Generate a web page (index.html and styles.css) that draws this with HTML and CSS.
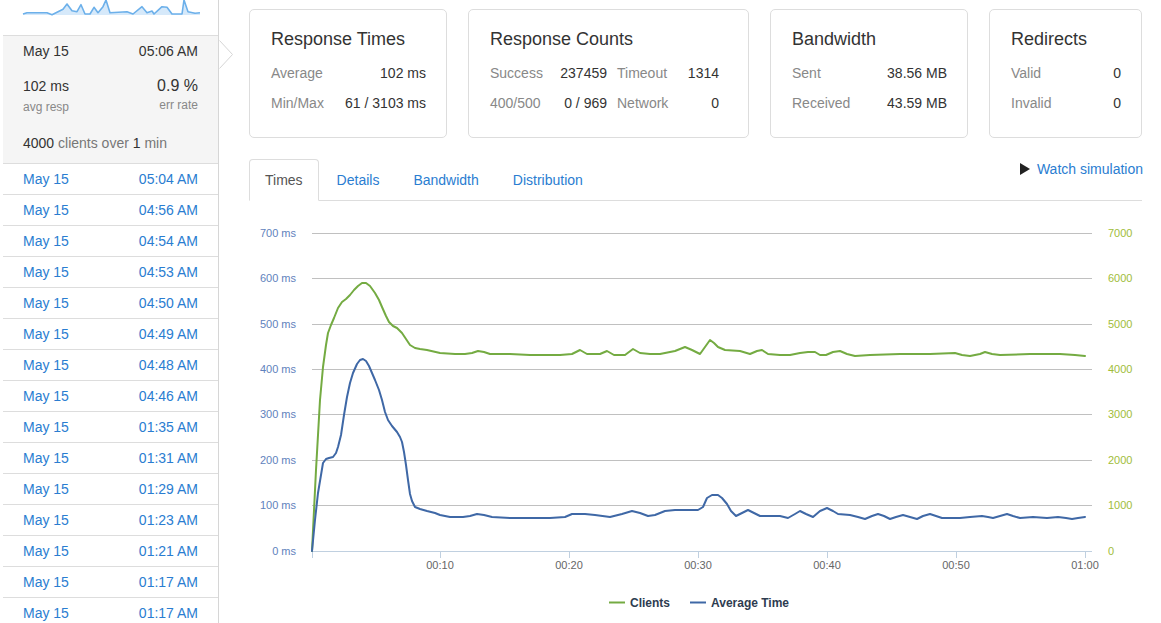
FILE: index.html
```html
<!DOCTYPE html>
<html>
<head>
<meta charset="utf-8">
<title>Load test results</title>
<link rel="stylesheet" href="styles.css">
</head>
<body>
<div class="page">
  <aside class="sidebar">
    <div class="spark">
      <svg class="spark-svg" viewBox="3 0 215 35" width="215" height="35">
        <path class="spark-fill" d="M23,14 L27,12.7 L47,12.7 L52,14.7 L58,11.7 L63,9.3 L67,4 L72,10.7 L77,11.7 L81,4.7 L85,14 L90,14 L94,7.3 L98,12.7 L103,6.7 L106,0 L110,12.7 L127,11.7 L133,14 L142,6.7 L147,12.7 L152,11 L154,14 L162,6.7 L167,7.3 L172,14 L182,14 L184,0 L188,11.7 L195,13.3 L200,12.7 L200,15 L23,15 Z"/>
        <polyline class="spark-line" points="23,14 27,12.7 47,12.7 52,14.7 58,11.7 63,9.3 67,4 72,10.7 77,11.7 81,4.7 85,14 90,14 94,7.3 98,12.7 103,6.7 106,0 110,12.7 127,11.7 133,14 142,6.7 147,12.7 152,11 154,14 162,6.7 167,7.3 172,14 182,14 184,0 188,11.7 195,13.3 200,12.7"/>
      </svg>
    </div>
    <div class="current">
      <div class="cur-head"><span>May 15</span><span>05:06 AM</span></div>
      <div class="cur-stats">
        <div class="stat"><div class="stat-val">102 ms</div><div class="stat-lbl">avg resp</div></div>
        <div class="stat stat-right"><div class="stat-val stat-big">0.9 %</div><div class="stat-lbl stat-lbl-right">err rate</div></div>
      </div>
      <div class="cur-clients"><span class="dark">4000</span> clients over <span class="dark">1</span> min</div>
      <svg class="pointer" width="15" height="30" viewBox="0 0 15 30"><polyline points="0.5,0.5 13.5,14.5 0.5,28.5" /></svg>
    </div>
    <ul class="runs">
      <li><span>May 15</span><span>05:04 AM</span></li>
      <li><span>May 15</span><span>04:56 AM</span></li>
      <li><span>May 15</span><span>04:54 AM</span></li>
      <li><span>May 15</span><span>04:53 AM</span></li>
      <li><span>May 15</span><span>04:50 AM</span></li>
      <li><span>May 15</span><span>04:49 AM</span></li>
      <li><span>May 15</span><span>04:48 AM</span></li>
      <li><span>May 15</span><span>04:46 AM</span></li>
      <li><span>May 15</span><span>01:35 AM</span></li>
      <li><span>May 15</span><span>01:31 AM</span></li>
      <li><span>May 15</span><span>01:29 AM</span></li>
      <li><span>May 15</span><span>01:23 AM</span></li>
      <li><span>May 15</span><span>01:21 AM</span></li>
      <li><span>May 15</span><span>01:17 AM</span></li>
      <li><span>May 15</span><span>01:17 AM</span></li>
    </ul>
  </aside>

  <main class="main">
    <div class="cards">
      <section class="card card-times">
        <h4 class="card-title">Response Times</h4>
        <div class="kv">
          <span class="lbl">Average</span><span class="val">102 ms</span>
          <span class="lbl">Min/Max</span><span class="val">61 / 3103 ms</span>
        </div>
      </section>
      <section class="card card-counts">
        <h4 class="card-title">Response Counts</h4>
        <div class="kv kv4">
          <span class="lbl">Success</span><span class="val">237459</span><span class="lbl lbl-pad">Timeout</span><span class="val">1314</span>
          <span class="lbl">400/500</span><span class="val">0 / 969</span><span class="lbl lbl-pad">Network</span><span class="val">0</span>
        </div>
      </section>
      <section class="card card-bw">
        <h4 class="card-title">Bandwidth</h4>
        <div class="kv">
          <span class="lbl">Sent</span><span class="val">38.56 MB</span>
          <span class="lbl">Received</span><span class="val">43.59 MB</span>
        </div>
      </section>
      <section class="card card-redir">
        <h4 class="card-title">Redirects</h4>
        <div class="kv">
          <span class="lbl">Valid</span><span class="val">0</span>
          <span class="lbl">Invalid</span><span class="val">0</span>
        </div>
      </section>
    </div>

    <div class="tabbar">
      <ul class="tabs">
        <li class="tab active">Times</li>
        <li class="tab">Details</li>
        <li class="tab">Bandwidth</li>
        <li class="tab">Distribution</li>
      </ul>
      <a class="watch"><svg class="play" width="10" height="12" viewBox="0 0 10 12"><polygon points="0,0 10,6 0,12"/></svg>Watch simulation</a>
    </div>

    <svg class="chart" viewBox="249 201 892 422" width="892" height="422">
      <g class="grid">
        <line x1="312" y1="233.5" x2="1092" y2="233.5"/>
        <line x1="312" y1="278.5" x2="1092" y2="278.5"/>
        <line x1="312" y1="324.5" x2="1092" y2="324.5"/>
        <line x1="312" y1="369.5" x2="1092" y2="369.5"/>
        <line x1="312" y1="414.5" x2="1092" y2="414.5"/>
        <line x1="312" y1="460.5" x2="1092" y2="460.5"/>
        <line x1="312" y1="505.5" x2="1092" y2="505.5"/>
      </g>
      <g class="axis">
        <line x1="312" y1="551.5" x2="1092" y2="551.5"/>
        <line x1="312.5" y1="551" x2="312.5" y2="558"/>
        <line x1="440.5" y1="551" x2="440.5" y2="558"/>
        <line x1="569.5" y1="551" x2="569.5" y2="558"/>
        <line x1="698.5" y1="551" x2="698.5" y2="558"/>
        <line x1="827.5" y1="551" x2="827.5" y2="558"/>
        <line x1="956.5" y1="551" x2="956.5" y2="558"/>
        <line x1="1085.5" y1="551" x2="1085.5" y2="558"/>
      </g>
      <g class="ylbl">
        <text x="296" y="237">700 ms</text>
        <text x="296" y="282">600 ms</text>
        <text x="296" y="328">500 ms</text>
        <text x="296" y="373">400 ms</text>
        <text x="296" y="418">300 ms</text>
        <text x="296" y="464">200 ms</text>
        <text x="296" y="509">100 ms</text>
        <text x="296" y="555">0 ms</text>
      </g>
      <g class="ylbl2">
        <text x="1108" y="237">7000</text>
        <text x="1108" y="282">6000</text>
        <text x="1108" y="328">5000</text>
        <text x="1108" y="373">4000</text>
        <text x="1108" y="418">3000</text>
        <text x="1108" y="464">2000</text>
        <text x="1108" y="509">1000</text>
        <text x="1108" y="555">0</text>
      </g>
      <g class="xlbl">
        <text x="440" y="569">00:10</text>
        <text x="569" y="569">00:20</text>
        <text x="698" y="569">00:30</text>
        <text x="827" y="569">00:40</text>
        <text x="956" y="569">00:50</text>
        <text x="1085" y="569">01:00</text>
      </g>
      <polyline class="s-clients" points="312,551 316,470 320,400 323,367 326,345 328,333 331,325 334,318 338,308 342,302 346,299 350,295 354,290 358,286 362,283 366,283 370,286 375,293 379,300 382,307 386,316 389,322 393,326 397,328 402,333 406,339 410,345 415,348 420,349 427,350 440,353 455,354 465,354 472,353 478,351 484,352 490,354 510,354 530,355 560,355 572,354 580,350 587,354 600,354 607,351 614,355 625,355 633,349 640,353 650,354 660,354 675,351 685,347 692,350 700,354 705,347 710,340 714,343 718,347 725,350 740,351 750,354 757,351 762,350 768,354 780,355 790,355 800,353 808,352 815,352 820,355 826,355 833,352 840,351 847,354 855,356 870,355 900,354 930,354 955,353 962,355 970,356 980,354 985,352 992,354 1000,355 1030,354 1060,354 1075,355 1085,356"/>
      <polyline class="s-avg" points="312,551 315,520 318,493 321,475 323,463 326,459 329,458 333,457 336,453 338,447 341,435 344,415 347,397 350,383 353,373 357,364 360,360 363,359 366,361 369,366 372,373 375,380 379,390 382,400 385,412 388,420 392,426 397,432 400,437 402,442 404,452 406,465 408,480 410,494 412,501 415,507 420,509 427,511 435,513 440,515 450,517 463,517 470,516 477,514 484,515 492,517 510,518 530,518 550,518 565,517 572,514 585,514 595,515 610,517 622,514 632,511 640,513 648,516 655,515 665,511 675,510 688,510 698,510 703,507 707,498 712,495 718,495 722,498 727,504 731,511 736,516 742,513 748,510 754,513 760,516 770,516 780,516 788,518 795,514 800,511 806,514 813,517 820,511 827,508 833,511 838,514 850,515 858,517 865,519 872,516 878,514 884,516 890,519 896,517 903,515 910,517 917,519 923,516 930,514 936,516 942,518 960,518 970,517 982,516 988,517 993,518 1000,516 1007,514 1013,516 1020,518 1033,517 1047,518 1058,517 1066,518 1072,519 1078,518 1085,517"/>
      <g class="legend">
        <line class="lg-clients" x1="609" y1="602.5" x2="625" y2="602.5"/>
        <text x="630" y="606.5">Clients</text>
        <line class="lg-avg" x1="690" y1="602.5" x2="706" y2="602.5"/>
        <text x="711" y="606.5">Average Time</text>
      </g>
    </svg>
  </main>
</div>
</body>
</html>
```

FILE: styles.css
```css
html, body {
  margin: 0;
  padding: 0;
  height: 100%;
  overflow: hidden;
  background: #fff;
}

body {
  font-family: "Liberation Sans", Arial, sans-serif;
  font-size: 14px;
  color: #333;
}

.page {
  display: flex;
  align-items: flex-start;
}

/* Sidebar */
.sidebar {
  flex: none;
  width: 215px;
  margin-left: 3px;
  border-right: 1px solid #d6d6d6;
  min-height: 700px;
}

.spark {
  height: 35px;
  border-bottom: 1px solid #ddd;
}

.spark-svg {
  display: block;
}

.spark-fill {
  fill: #d6e9fa;
}

.spark-line {
  fill: none;
  stroke: #6cb0ea;
  stroke-width: 1.6;
  stroke-linejoin: round;
}

.current {
  position: relative;
  background: #f5f5f5;
  padding: 5px 20px 10px;
  border-bottom: 1px solid #ddd;
  color: #333;
}

.cur-head {
  display: flex;
  justify-content: space-between;
  line-height: 20px;
}

.cur-stats {
  display: flex;
  justify-content: space-between;
  margin-top: 15px;
}

.stat-val {
  line-height: 20px;
}

.stat-big {
  font-size: 16px;
}

.stat-right {
  text-align: right;
}

.stat-lbl {
  font-size: 12px;
  line-height: 16px;
  margin-top: 3px;
  color: #888;
}

.stat-lbl-right {
  margin-top: 1px;
}

.cur-clients {
  margin-top: 18px;
  line-height: 20px;
  color: #777;
}

.cur-clients .dark {
  color: #333;
}

.pointer {
  position: absolute;
  left: 216px;
  top: 4px;
}

.pointer polyline {
  fill: #fff;
  stroke: #d6d6d6;
  stroke-width: 1;
}

.runs {
  list-style: none;
  margin: 0;
  padding: 0;
}

.runs li {
  display: flex;
  justify-content: space-between;
  padding: 0 20px;
  line-height: 30px;
  border-bottom: 1px solid #ddd;
  color: #2a7dd1;
}

/* Main */
.main {
  flex: none;
  width: 893px;
  margin-left: 30px;
}

.cards {
  display: flex;
  gap: 21px;
  margin-top: 9px;
}

.card {
  box-sizing: border-box;
  border: 1px solid #ddd;
  border-radius: 5px;
  padding: 18px 20px 19px 21px;
}

.card-times { width: 198px; }
.card-counts { width: 281px; }
.card-bw { width: 198px; }
.card-redir { width: 153px; }

.card-title {
  margin: 0;
  font-size: 18px;
  font-weight: normal;
  line-height: 22px;
  color: #333;
}

.kv {
  display: grid;
  grid-template-columns: 1fr auto;
  margin-top: 8px;
  line-height: 30px;
}

.kv4 {
  grid-template-columns: 60px 57px 70px 42px;
}

.lbl {
  color: #888;
}

.lbl-pad {
  padding-left: 10px;
}

.val {
  text-align: right;
  color: #333;
}

/* Tabs */
.tabbar {
  display: flex;
  margin-top: 21px;
  border-bottom: 1px solid #ddd;
}

.tabs {
  display: flex;
  list-style: none;
  margin: 0 0 -1px;
  padding: 0;
}

.tab {
  margin-right: 2px;
  padding: 10px 15px;
  line-height: 20px;
  border: 1px solid transparent;
  border-radius: 4px 4px 0 0;
  color: #2a7dd1;
}

.tab.active {
  color: #555;
  background: #fff;
  border-color: #ddd #ddd transparent;
}

.watch {
  margin-left: auto;
  margin-right: -1px;
  align-self: flex-start;
  display: flex;
  align-items: center;
  gap: 7px;
  line-height: 20px;
  color: #2a7dd1;
}

.play {
  display: block;
}

.play polygon {
  fill: #222;
}

/* Chart */
.chart {
  display: block;
  font-family: "Liberation Sans", Arial, sans-serif;
}

.grid line {
  stroke: #c0c0c0;
  stroke-width: 1;
}

.axis line {
  stroke: #c0d0e0;
  stroke-width: 1;
}

.ylbl text {
  font-size: 11px;
  fill: #5f82bd;
  text-anchor: end;
}

.ylbl2 text {
  font-size: 11px;
  fill: #9fbd3a;
}

.xlbl text {
  font-size: 11px;
  fill: #666;
  text-anchor: middle;
}

.s-clients {
  fill: none;
  stroke: #74ab42;
  stroke-width: 2;
  stroke-linejoin: round;
  stroke-linecap: round;
}

.s-avg {
  fill: none;
  stroke: #3f68a6;
  stroke-width: 2;
  stroke-linejoin: round;
  stroke-linecap: round;
}

.legend text {
  font-size: 12px;
  font-weight: bold;
  fill: #2e3c50;
}

.lg-clients {
  stroke: #74ab42;
  stroke-width: 2;
}

.lg-avg {
  stroke: #3f68a6;
  stroke-width: 2;
}
```
